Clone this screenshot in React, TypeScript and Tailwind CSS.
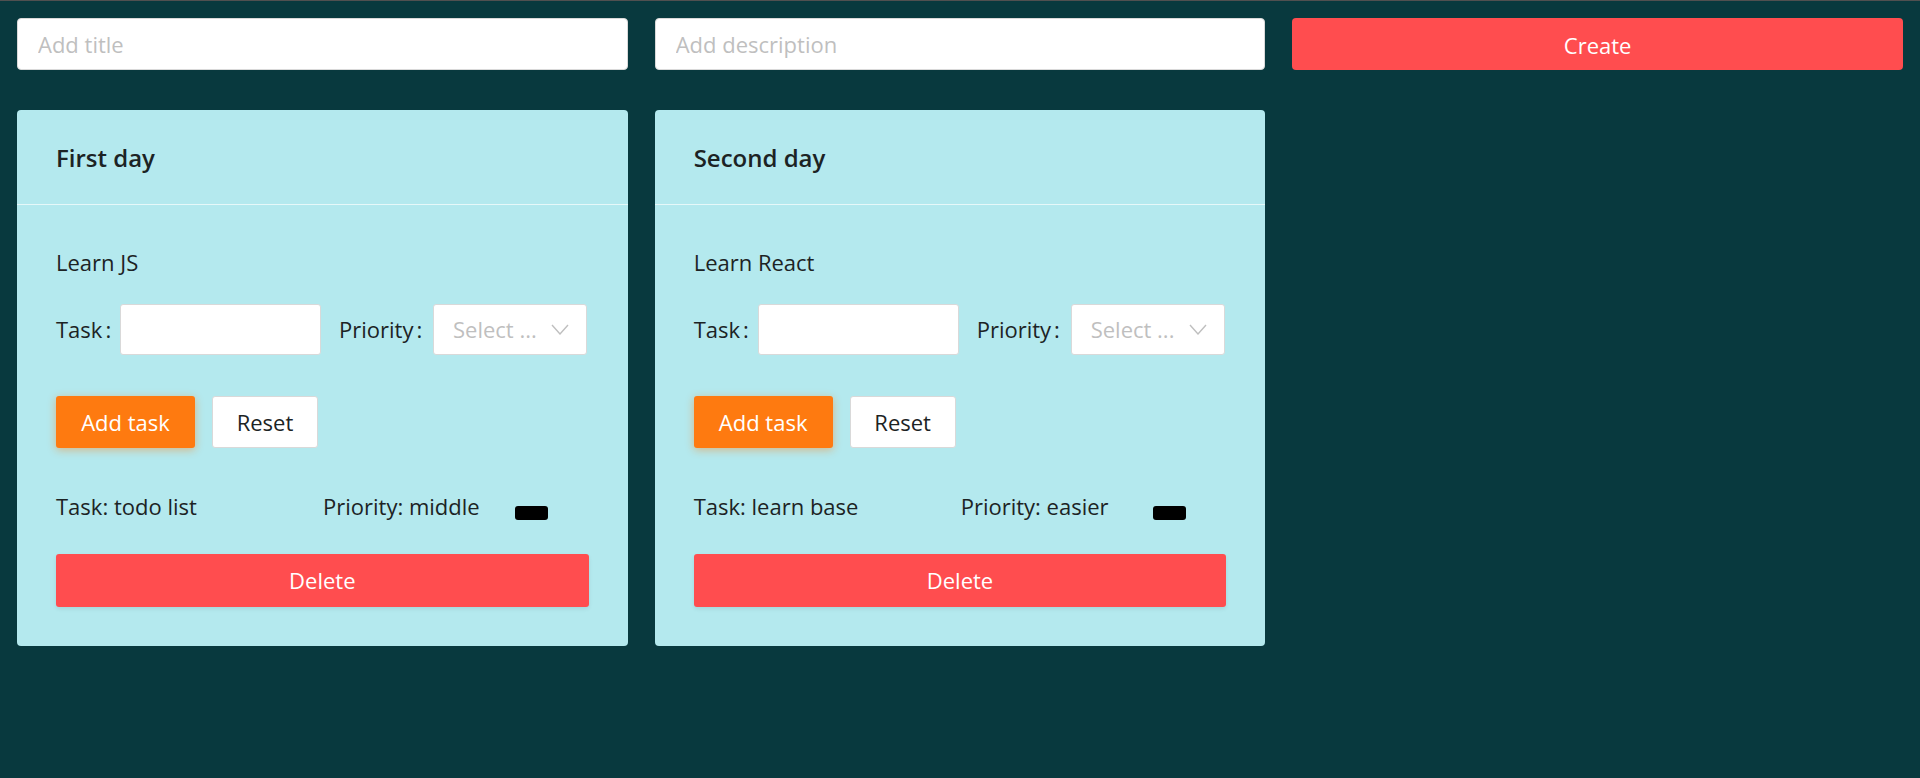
const days = [
  { title: 'First day', description: 'Learn JS', task: 'todo list', priority: 'middle' },
  { title: 'Second day', description: 'Learn React', task: 'learn base', priority: 'easier' },
]

function DayCard({ day }: { day: (typeof days)[number] }) {
  return (
    <div className="rounded-[4px] bg-[#b4e9ee] text-[#1c2324]">
      {/* Header */}
      <div className="flex h-[95px] items-center border-b border-[#e6f8f9] px-[39px] pt-[2px]">
        <h3 className="text-[24px] font-semibold">{day.title}</h3>
      </div>

      {/* Body */}
      <div className="px-[39px] pt-[41px] pb-[39px]">
        <p className="text-[22px] leading-[33px]">{day.description}</p>

        <div className="mt-[25px] flex items-center">
          <label className="w-[64px] text-[22px]">
            Task<span className="ml-[3px]">:</span>
          </label>
          <input
            className="h-[51px] w-[201px] rounded-[3px] border border-[#d9d9d9] bg-white px-4 text-[22px] outline-none"
          />
          <label className="ml-[18px] w-[94px] text-[22px]">
            Priority<span className="ml-[3px]">:</span>
          </label>
          <div className="flex h-[51px] w-[154px] items-center justify-between rounded-[3px] border border-[#d9d9d9] bg-white pl-[19px] pr-[17px]">
            <span className="text-[22px] text-[#bfbfbf]">Select ...</span>
            <svg width="18" height="11" viewBox="0 0 18 11" fill="none">
              <polyline points="1,1 9,10 17,1" stroke="#bfbfbf" strokeWidth="1.4" />
            </svg>
          </div>
        </div>

        <div className="mt-[41px] flex gap-[17px]">
          <button className="h-[52px] w-[139px] rounded-[3px] bg-[#fe7a10] text-[22px] text-white shadow-[0_2px_8px_rgba(254,122,16,0.45)]">
            Add task
          </button>
          <button className="h-[52px] w-[106px] rounded-[3px] border border-[#d9d9d9] bg-white text-[22px]">
            Reset
          </button>
        </div>

        <div className="mt-[42px] flex items-center text-[22px] leading-[33px]">
          <span className="w-[267px]">Task: {day.task}</span>
          <span className="w-[192px]">Priority: {day.priority}</span>
          <span className="mt-[12px] h-[14px] w-[33px] rounded-[3px] bg-black" />
        </div>

        <button className="mt-[31px] h-[53px] w-full rounded-[3px] bg-[#ff4d4f] text-[22px] text-white shadow-[0_2px_4px_rgba(0,0,0,0.08)]">
          Delete
        </button>
      </div>
    </div>
  )
}

export default function App() {
  return (
    <div className="min-h-screen border-t border-[#505050] bg-[#08393e] px-[17px] pt-[17px] font-['Open_Sans',sans-serif]">
      {/* Create form */}
      <div className="grid grid-cols-3 gap-[27px]">
        <input
          placeholder="Add title"
          className="h-[52px] rounded-[4px] border border-[#d9d9d9] bg-white px-[20px] text-[22px] outline-none placeholder:text-[#bfbfbf]"
        />
        <input
          placeholder="Add description"
          className="h-[52px] rounded-[4px] border border-[#d9d9d9] bg-white px-[20px] text-[22px] outline-none placeholder:text-[#bfbfbf]"
        />
        <button className="h-[52px] rounded-[4px] bg-[#ff4d4f] pt-[2px] text-[22px] text-white">
          Create
        </button>
      </div>

      {/* Day cards */}
      <div className="mt-[40px] grid grid-cols-3 items-start gap-[27px]">
        {days.map((day) => (
          <DayCard key={day.title} day={day} />
        ))}
      </div>
    </div>
  )
}
